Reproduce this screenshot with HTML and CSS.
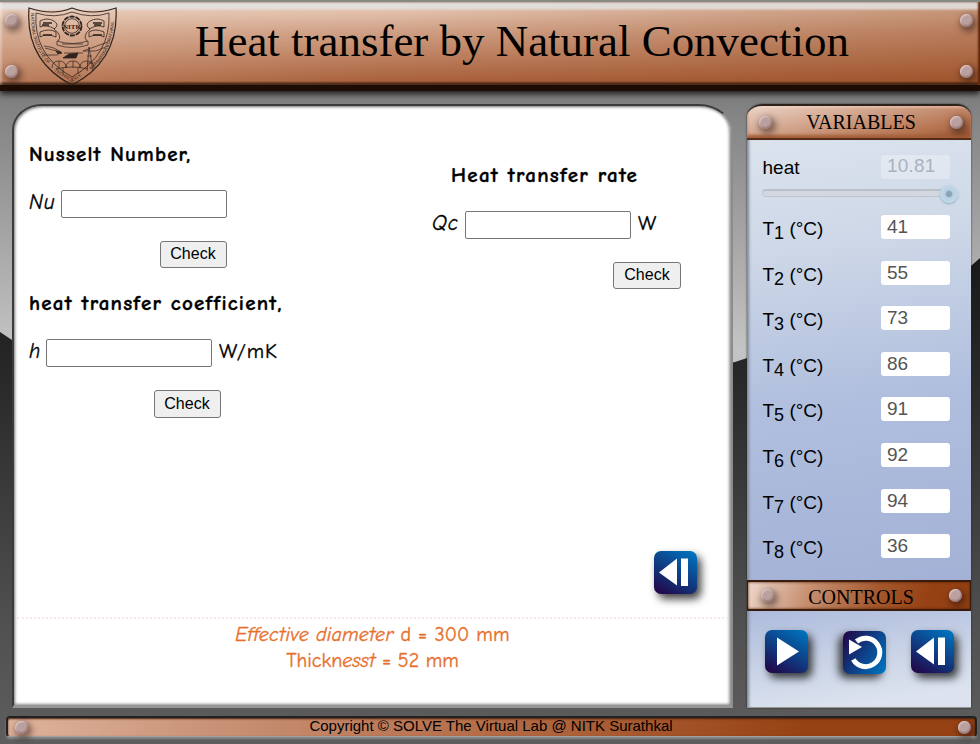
FILE: index.html
```
<!DOCTYPE html>
<html lang="en">
<head>
<meta charset="utf-8">
<title>Heat transfer by Natural Convection</title>
<link rel="stylesheet" href="styles.css">
</head>
<body>
<svg class="backdrop" viewBox="0 0 980 744" aria-hidden="true">
  <defs>
    <linearGradient id="dark" x1="0" y1="0" x2="0" y2="1"><stop offset="0" stop-color="#191919"/><stop offset=".25" stop-color="#292929"/><stop offset=".75" stop-color="#505050"/><stop offset="1" stop-color="#5e5e5e"/></linearGradient>
    <linearGradient id="blue" x1=".8" y1="0" x2=".2" y2="1"><stop offset="0" stop-color="#0070ba"/><stop offset=".5" stop-color="#0f3e85"/><stop offset="1" stop-color="#21094b"/></linearGradient>
    <linearGradient id="blue2" x1="0" y1=".15" x2="1" y2=".8"><stop offset="0" stop-color="#21094b"/><stop offset=".5" stop-color="#0f3e85"/><stop offset="1" stop-color="#0070ba"/></linearGradient>
  </defs>
  <path d="M0 332 L12 340 Q370 440 735 362 L747 358 Q880 340 972 265 L980 258 V744 H0Z" fill="url(#dark)"/>
</svg>
<div class="page">
  <header class="top">
    <div class="rivets"><i class="rivet"></i><i class="rivet"></i></div>
    <svg class="crest" viewBox="0 0 90 79" fill="none" stroke="#30231e" stroke-width=".8">
      <path d="M1 1 Q25 9 44 1 Q64 9 88 1 Q91 54 44 78 Q-3 54 1 1Z" stroke-width="1.2"/>
      <path d="M8 6 Q27 12 44 5 Q63 12 81 6 Q83 48 44 70 Q5 48 8 6Z"/>
      <path id="crest-left" d="M3 6 Q2 42 26 63" stroke="none"/>
      <path id="crest-foot" d="M26 64 L44 75 L62 64" stroke="none"/>
      <path id="crest-right" d="M63 63 Q87 43 86 6" stroke="none"/>
      <text class="crest-text"><textPath href="#crest-left">NATIONAL INSTITUTE OF</textPath></text>
      <text class="crest-text"><textPath href="#crest-foot">TECHNOLOGY</textPath></text>
      <text class="crest-text"><textPath href="#crest-right">KARNATAKA SURATHKAL</textPath></text>
      <circle cx="44" cy="19" r="9.5" stroke-width="1.8" stroke-dasharray="5 1"/><circle cx="44" cy="19" r="7.3"/>
      <text class="crest-name" x="44" y="22" text-anchor="middle">NITK</text>
      <path d="M12 14 Q19 10 26 14 Q32 18 26 22 Q35 29 30 34 M27 22 Q18 17 12 20 V14 M12 25 Q21 21 28 25 V30 Q19 26 12 30Z M76 14 Q69 10 62 14 Q56 18 62 22 Q54 29 59 34 M61 22 Q70 17 76 20 V14 M76 25 Q67 21 61 25 V30 Q69 26 76 30Z"/>
      <path d="M15 16 H24 M14 18 H21 M65 16 H74 M66 18 H73 M15 28 H24 M65 28 H74" stroke-width="1.3"/>
      <path d="M29 34 Q44 39 60 34 V38 Q44 43 29 38Z M34 37 H55 M16 39 Q25 39 33 45 L17 41 M80 35 L55 44 H68 L80 39 M16 48 H30 M36 46 H55 M61 40 L59 64 M61 40 L65 64 M59 49 H64 M59 56 H65" stroke-width=".7"/>
      <path d="M35 51 L41 47 L50 46 L48 51Z M28 44 L34 46 L30 47Z" fill="#30231e"/>
      <path d="M24 61 Q24 54 31 54 Q38 54 38 61 Q38 54 45 54 Q52 54 52 61 Q52 54 59 54 Q66 54 66 61 M31 54 V61 M45 54 V61 M35 61 V67 M50 61 V67 M28 62 Q44 58 60 62" stroke-width=".7"/>
    </svg>
    <h1>Heat transfer by Natural Convection</h1>
    <div class="rivets"><i class="rivet"></i><i class="rivet"></i></div>
  </header>

  <div class="workspace">
    <main class="panel">
      <div class="forms">
        <section class="col-left">
          <h2 class="t-nu">Nusselt Number,</h2>
          <div class="field"><em class="nu">Nu</em><input type="text" aria-label="Nu"></div>
          <button class="check check-nu">Check</button>
          <h2 class="t-coef">heat transfer coefficient,</h2>
          <div class="field"><em class="h">h</em><input type="text" aria-label="h"><span class="unit unit-h">W/mK</span></div>
          <button class="check check-h">Check</button>
        </section>
        <section class="col-right">
          <h2 class="t-rate">Heat transfer rate</h2>
          <div class="field"><em class="qc">Qc</em><input type="text" aria-label="Qc"><span class="unit">W</span></div>
          <button class="check check-q">Check</button>
          <svg class="icon back" viewBox="0 0 43 43"><rect width="43" height="43" rx="7" fill="url(#blue)"/><path d="M5 21.5 L23 7.5 V34.5Z M27 7.5 H34 V35 H27Z" fill="#fff"/></svg>
        </section>
      </div>
      <div class="notes">
        <p class="n1"><em>Effective diameter</em> d = 300 mm</p>
        <p class="n2">Thickn<em>esst</em> = 52 mm</p>
      </div>
    </main>

    <aside class="side">
      <div class="bar bar-vars"><i class="rivet"></i><h3>VARIABLES</h3><i class="rivet"></i></div>
      <div class="vars">
        <div class="row heat"><span>heat</span><span class="value off">10.81</span></div>
        <div class="slider"><i></i></div>
        <div class="row"><span>T<sub>1</sub> (°C)</span><span class="value">41</span></div>
        <div class="row"><span>T<sub>2</sub> (°C)</span><span class="value">55</span></div>
        <div class="row"><span>T<sub>3</sub> (°C)</span><span class="value">73</span></div>
        <div class="row"><span>T<sub>4</sub> (°C)</span><span class="value">86</span></div>
        <div class="row"><span>T<sub>5</sub> (°C)</span><span class="value">91</span></div>
        <div class="row"><span>T<sub>6</sub> (°C)</span><span class="value">92</span></div>
        <div class="row"><span>T<sub>7</sub> (°C)</span><span class="value">94</span></div>
        <div class="row"><span>T<sub>8</sub> (°C)</span><span class="value">36</span></div>
      </div>
      <div class="bar bar-ctl"><i class="rivet"></i><h3>CONTROLS</h3><i class="rivet"></i></div>
      <div class="controls">
        <svg class="icon" viewBox="0 0 43 43"><rect width="43" height="43" rx="7" fill="url(#blue)"/><path d="M12 7.5 L34 21.5 L12 35.5Z" fill="#fff"/></svg>
        <svg class="icon undo" viewBox="0 0 43 43"><rect width="43" height="43" rx="7" fill="url(#blue2)"/><path d="M13.5 10.5 A14.2 14.2 0 1 1 10.3 28.5" fill="none" stroke="#fff" stroke-width="5"/><path d="M6 8.5 L19 16 L6 23.5Z" fill="#fff"/></svg>
        <svg class="icon" viewBox="0 0 43 43"><rect width="43" height="43" rx="7" fill="url(#blue)"/><path d="M5 21.5 L23 7.5 V34.5Z M27 7.5 H34 V35 H27Z" fill="#fff"/></svg>
      </div>
    </aside>
  </div>

  <footer class="foot"><i class="rivet"></i><span>Copyright © SOLVE The Virtual Lab @ NITK Surathkal</span><i class="rivet"></i></footer>
</div>
</body>
</html>
```
FILE: styles.css
```
* { box-sizing: border-box; }
body { margin: 0; width: 980px; height: 744px; overflow: hidden; background: linear-gradient(#7d7d7d 90px, #c4c4c4 350px); font-family: "Liberation Sans", sans-serif; color: #000; }
h1, h2, h3, p { margin: 0; font-weight: normal; white-space: nowrap; }
.backdrop { position: absolute; left: 0; top: 0; width: 980px; height: 744px; z-index: -1; }
.page { height: 744px; display: flex; flex-direction: column; }

.rivet { display: block; width: 13px; height: 13px; flex: none; border-radius: 50%; background: radial-gradient(circle at 45% 40%, #bba0a0 0 45%, #a48585 60%, #6c5050 100%); box-shadow: inset 1px 1px 1px #dcc6c6, 2px 3px 6px 2px rgba(40, 20, 15, .5); }

.top { height: 91px; flex: none; display: flex; border-top: 2px solid #868a83; border-bottom: 6px solid #1d0c03; padding: 0 7px 0 5px; background: linear-gradient(rgba(226, 226, 226, .85) 0 6px, rgba(226, 226, 226, 0) 9px), linear-gradient(transparent 79px, #1d0c03 83px), linear-gradient(100deg, rgba(255, 240, 225, .2), rgba(140, 60, 15, .0) 40%, rgba(140, 60, 15, .35)), linear-gradient(#e5c6b3 6px, #cf9f84 30px, #a9603a 80px); box-shadow: inset 2px 0 2px rgba(255, 255, 255, .3), inset -2px 0 2px #63270b, 0 3px 6px #1d1d1d; }
.rivets { display: flex; flex-direction: column; gap: 38px; padding-top: 12px; }
.crest { width: 90px; height: 79px; margin: 5px 0 0 10px; }
.crest-text { font: 4.6px "Liberation Sans", sans-serif; fill: #30231e; stroke: none; }
.crest-name { font: bold 7px "Liberation Serif", serif; fill: #30231e; stroke: none; }
.top h1 { flex: 1; margin-left: 77px; padding-top: 14px; font: 44.95px/50px "Liberation Serif", serif; }

.workspace { flex: none; display: flex; gap: 14px; height: 604px; margin: 13px 9px 0 12px; }
.panel { width: 721px; border: 2px solid #3b3b3b; border-right-color: #8c8c8c; border-bottom: 3px solid #969696; border-radius: 30px 34px 0 0 / 26px 28px 0 0; background: #fff; box-shadow: inset 1px 1px 3px #777, inset -2px -1px 3px #999; display: flex; flex-direction: column; font-family: "Comic Sans MS", "Comic Neue", Lato, sans-serif; font-size: 20px; -webkit-text-stroke: .35px currentColor; }
.forms { height: 511px; display: flex; }
.col-left { width: 403px; padding: 36px 0 0 15px; }
.col-right { padding-top: 57px; flex: 1; }
.panel h2 { font-size: 21px; line-height: 24px; margin-bottom: 24px; font-weight: bold; }
.t-nu { letter-spacing: 1.15px; }
.t-coef { letter-spacing: 1.22px; }
.panel .t-rate { margin-left: 34px; letter-spacing: 1.3px; }
.field { display: flex; height: 28px; line-height: 25px; font-size: 21px; }
.field em { flex: none; }
.nu { width: 32px; letter-spacing: 1px; }
.h { width: 17px; }
.qc { width: 48px; padding-left: 15px; letter-spacing: .8px; white-space: nowrap; }
.field input { width: 166px; height: 28px; padding: 1px 2px; border: 1px solid #767676; border-radius: 2px; background: #fff; }
.unit { margin-left: 7px; }
.unit-h { letter-spacing: .9px; }
.check { display: block; width: 67px; height: 28px; margin-top: 23px; padding: 0 1px 1px 0; border: 1px solid #767676; border-radius: 3px; background: #efefef; color: #000; font: 16px "Liberation Sans", sans-serif; -webkit-text-stroke: 0; }
.check-nu { height: 27px; margin-left: 131px; margin-bottom: 23px; }
.check-h { margin-left: 125px; }
.check-q { margin-left: 196px; width: 68px; height: 27px; padding-right: 0; }
.icon { display: block; width: 43px; height: 43px; flex: none; overflow: visible; filter: drop-shadow(4px 5px 4px rgba(0, 0, 0, .75)); }
.icon.undo { filter: drop-shadow(-4px 4px 4px rgba(0, 0, 0, .75)); margin: 1px 0 0 10px; }
.back { margin: 262px 0 0 237px; }
.notes { border-top: 2px dotted #f5e9ec; margin-left: 3px; margin-right: 3px; padding-top: 3px; text-align: center; color: #e76f2c; line-height: 26px; }
.n1 { letter-spacing: .2px; }

.side { width: 224px; display: flex; flex-direction: column; border-radius: 16px 14px 0 0 / 13px; overflow: hidden; border-top: 2px solid #2e221c; border-bottom: 1px solid #999; box-shadow: 0 0 2px #222; }
.bar { display: flex; justify-content: space-between; align-items: center; flex: none; }
.bar h3 { font: 20px "Liberation Serif", serif; }
.bar-vars { height: 34px; padding: 0 8px 0 12px; background: linear-gradient(168deg, #ecd5c9 0, #d2a58d 38%, #b4714d 80%, #944d2b 100%); border-bottom: 2px solid #552c1a; box-shadow: inset 0 2px 2px rgba(255, 220, 200, .4), inset 0 -3px 3px #a35e38; }
.bar-ctl { height: 31px; padding: 3px 8px 0 13px; border: 1px solid #3b1b0c; border-width: 2px 1px; background: linear-gradient(112deg, #efd9cd 0, #c68f70 28%, #a4572d 58%, #964113 80%); box-shadow: inset 0 0 3px #522008; }
.bar-ctl .rivet { margin-top: -3px; }
.bar-ctl h3 { margin-left: -1px; }
.vars { height: 440px; flex: none; padding: 15px 21px 0 15.5px; background: linear-gradient(172deg, #dbe3ed 0, #cdd7e7 25%, #b0bfde 58%, #a3b1d6 100%); box-shadow: inset 4px 0 3px -2px #7e8898; font-size: 19px; }
.row { display: flex; justify-content: space-between; height: 24px; margin-bottom: 21.6px; line-height: 27px; white-space: nowrap; }
.row sub { line-height: 0; font-size: 18px; vertical-align: -4px; }
.value { width: 69px; height: 24px; padding-left: 6px; border-radius: 3px; background: #fff; color: #555; line-height: 23px; }
.row.heat { margin: 0; line-height: 26px; }
.value.off { background: rgba(255, 255, 255, .3); color: #abb2bc; letter-spacing: .2px; line-height: 22px; }
.slider { width: 194px; height: 8px; margin: 10px 0 18px -1px; border: 1px solid #bec5cf; border-top: 2px solid #b9c0ca; border-radius: 4px; background: #d2d7e0; display: flex; justify-content: flex-end; align-items: center; }
.slider i { width: 18px; height: 18px; margin-right: -3px; flex: none; border-radius: 50%; background: radial-gradient(circle, #8aa4b7 0 2.5px, #b9d1e2 4px, #bfd7e8 8px); box-shadow: 0 1px 2px #8da6bc; }
.controls { flex: 1; display: flex; align-items: flex-start; padding: 19px 17px 0 18px; justify-content: space-between; background: linear-gradient(172deg, #adbbdc 0, #cad4e7 50%, #dce3ee 85%); box-shadow: inset 4px 0 3px -2px #7e8898; }

.check-nu + .t-coef { margin-top: 23px; }
.foot { flex: none; height: 21px; margin: 8px 3px 0 6px; padding: 0 4px 0 7px; display: flex; justify-content: space-between; align-items: center; border: 2px solid #222; border-bottom: 1px solid #a6a09c; border-radius: 4px; background: linear-gradient(95deg, #deb49c 0, #ca9479 20%, #b26943 52%, #964214 82%); box-shadow: 0 2px 2px #898989, inset 0 1px 2px #4b210f; font-size: 15px; line-height: 17px; }
.foot span { margin: -4px 4px 0 0; }
```
